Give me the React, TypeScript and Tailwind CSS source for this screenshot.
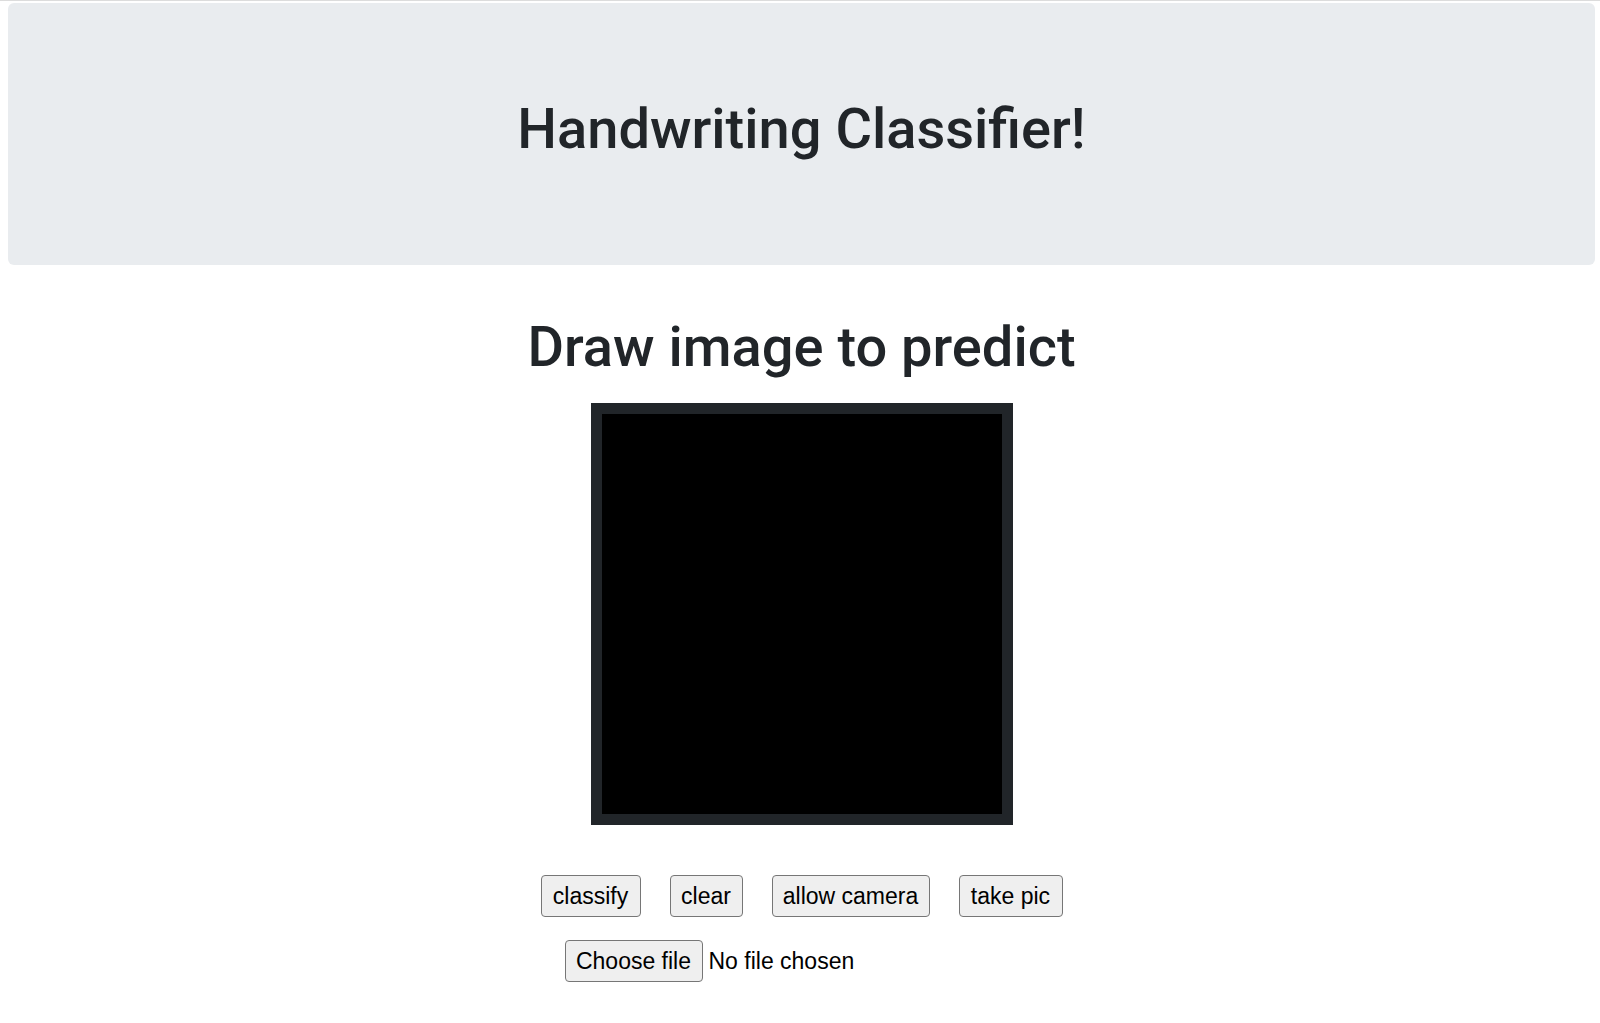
const actions = [
  { label: 'classify', width: 'w-[100px]' },
  { label: 'clear', width: 'w-[73px]' },
  { label: 'allow camera', width: 'w-[158px]' },
  { label: 'take pic', width: 'w-[104px]' },
]

export default function App() {
  return (
    <main className="min-h-screen border-t border-[#dcdcdc] bg-white pl-[8px] pr-[5px] font-['Liberation_Sans',Arial,sans-serif] text-[#212529]">
      <header className="mt-[2px] rounded-[6px] bg-[#e9ecef] pt-[93px] pb-[102px] text-center">
        <h1 className="font-['Roboto',sans-serif] text-[56px] font-medium leading-[1.2]">Handwriting Classifier!</h1>
      </header>

      <section className="mt-[49px] flex flex-col items-center">
        <h2 className="font-['Roboto',sans-serif] text-[56px] font-medium leading-[1.2]">Draw image to predict</h2>

        <div className="mt-[22px] border-[11px] border-[#212529] bg-black">
          <canvas width={400} height={400} className="block h-[400px] w-[400px] bg-black" />
        </div>

        <div className="mt-[50px] flex justify-center gap-[29px] pr-[0px]">
          {actions.map((action) => (
            <button
              key={action.label}
              className={`${action.width} h-[42px] rounded-[4px] border border-[#767676] bg-[#efefef] text-[23px] leading-none text-black`}
            >
              {action.label}
            </button>
          ))}
        </div>

        <div className="mt-[23px] flex w-[474px] items-center text-[23px] text-black">
          <button className="h-[42px] w-[138px] rounded-[4px] border border-[#767676] bg-[#efefef] leading-none">
            Choose file
          </button>
          <span className="ml-[6px]">No file chosen</span>
        </div>
      </section>
    </main>
  )
}
